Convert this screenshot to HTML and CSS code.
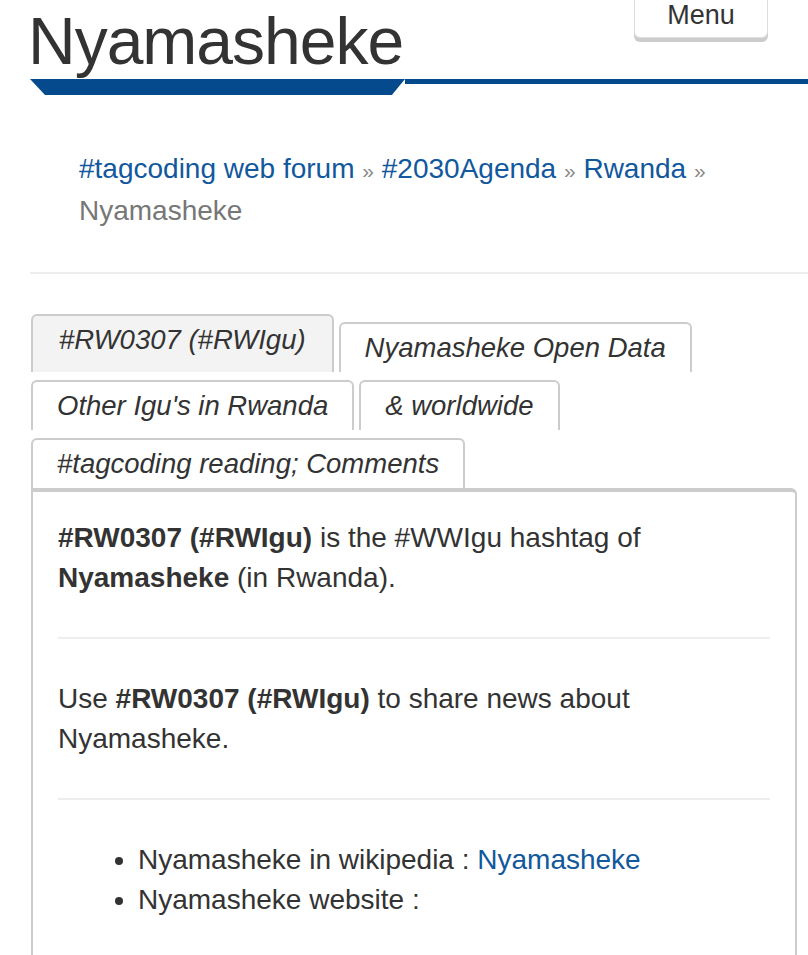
FILE: index.html
```html
<!DOCTYPE html>
<html lang="en">
<head>
  <meta charset="UTF-8">
  <meta name="viewport" content="width=device-width, initial-scale=1.0">
  <title>Nyamasheke</title>
  <link rel="stylesheet" href="styles.css">
</head>
<body>
  <div class="masthead">
    <h1 class="site-title">Nyamasheke</h1>
    <button class="menu-btn">Menu</button>
  </div>
  <div class="rule">
    <div class="rule-tab"></div>
    <div class="rule-line"></div>
  </div>

  <div class="breadcrumb">
    <a href="#">#tagcoding web forum</a> <span class="sep">&raquo;</span>
    <a href="#">#2030Agenda</a> <span class="sep">&raquo;</span>
    <a href="#">Rwanda</a> <span class="sep">&raquo;</span>
    <span class="current">Nyamasheke</span>
  </div>

  <hr class="divider">

  <ul class="tabs">
    <li class="tab active">#RW0307 (#RWIgu)</li>
    <li class="tab">Nyamasheke Open Data</li>
    <li class="tab">Other Igu's in Rwanda</li>
    <li class="tab">&amp; worldwide</li>
    <li class="tab">#tagcoding reading; Comments</li>
  </ul>

  <div class="panel">
    <p><b>#RW0307 (#RWIgu)</b> is the #WWIgu hashtag of <b>Nyamasheke</b> (in Rwanda).</p>
    <hr class="panel-rule">
    <p>Use <b>#RW0307 (#RWIgu)</b> to share news about Nyamasheke.</p>
    <hr class="panel-rule">
    <ul class="links">
      <li>Nyamasheke in wikipedia : <a href="#">Nyamasheke</a></li>
      <li>Nyamasheke website :</li>
    </ul>
  </div>
</body>
</html>
```

FILE: styles.css
```css
body {
  margin: 0;
  font-family: "Liberation Sans", Arial, Helvetica, sans-serif;
  color: #333;
  background: #fff;
  font-size: 28px;
}

a {
  color: #11589d;
  text-decoration: none;
}

.masthead {
  display: flex;
  justify-content: space-between;
  align-items: flex-start;
  padding-left: 28px;
}

.site-title {
  margin: 3px 0 0;
  font-size: 66px;
  font-weight: normal;
  line-height: 76px;
  color: #333;
  letter-spacing: -1px;
}

.menu-btn {
  margin: -4px 40px 0 0;
  width: 134px;
  height: 42px;
  padding: 0 0 4px;
  font-family: inherit;
  font-size: 27px;
  line-height: 38px;
  color: #333;
  background: #fff;
  border: 1px solid #ddd;
  border-top: none;
  border-radius: 0 0 6px 6px;
  box-shadow: 0 4px 0 #ccc;
}

.rule {
  display: flex;
  align-items: flex-start;
  margin-left: 30px;
}

.rule-tab {
  width: 375px;
  height: 16px;
  background: #044a8c;
  clip-path: polygon(0 0, 100% 0, 96.5% 100%, 4% 100%);
}

.rule-line {
  flex: 1;
  height: 5px;
  background: #044a8c;
}

.breadcrumb {
  margin: 54px 0 0;
  padding: 0 60px 0 79px;
  line-height: 40px;
}

.sep {
  color: #888;
  font-size: 21px;
}

.current {
  color: #777;
}

.divider {
  margin: 41px 0 0 30px;
  border: none;
  border-top: 2px solid #eee;
}

.tabs {
  list-style: none;
  margin: 40px 11px 0 31px;
  padding: 0;
  display: flex;
  flex-wrap: wrap;
  align-items: flex-end;
  column-gap: 5px;
  row-gap: 8px;
  font-size: 27.5px;
}

.tab {
  font-style: italic;
  line-height: 48px;
  padding: 0 24px;
  border: 2px solid #ccc;
  border-bottom: none;
  border-radius: 6px 6px 0 0;
  background: #fff;
}

.tab.active {
  background: #f3f3f3;
  padding: 0 26px 8px;
}

.panel {
  margin: 0 11px 0 31px;
  padding: 26px 25px 120px;
  border: 2px solid #ccc;
  border-top-width: 4px;
  border-radius: 0 6px 0 0;
}

.panel p {
  margin: 0;
  line-height: 40px;
}

.panel-rule {
  margin: 39px 0 40px;
  border: none;
  border-top: 2px solid #eee;
}

.links {
  margin: 0;
  padding-left: 80px;
  line-height: 40px;
}
```
